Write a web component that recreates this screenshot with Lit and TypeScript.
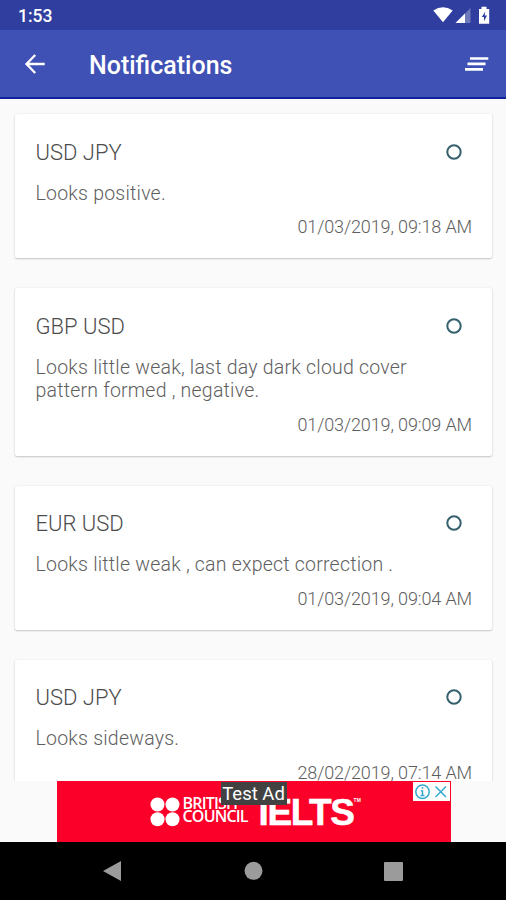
import { LitElement, html, css } from "lit";
import { customElement, property } from "lit/decorators.js";

interface Note {
  pair: string;
  text: string;
  date: string;
}

const NOTES: Note[] = [
  { pair: "USD JPY", text: "Looks positive.", date: "01/03/2019, 09:18 AM" },
  {
    pair: "GBP USD",
    text: "Looks little weak, last day dark cloud cover pattern formed , negative.",
    date: "01/03/2019, 09:09 AM",
  },
  { pair: "EUR USD", text: "Looks little weak , can expect correction .", date: "01/03/2019, 09:04 AM" },
  { pair: "USD JPY", text: "Looks sideways.", date: "28/02/2019, 07:14 AM" },
];

@customElement("note-card")
class NoteCard extends LitElement {
  @property({ attribute: false }) note!: Note;

  static styles = css`
    :host {
      display: block;
      box-sizing: border-box;
      background: #fff;
      border-radius: 2px;
      box-shadow: 0 1px 2px rgba(0, 0, 0, 0.2), 0 0 2px rgba(0, 0, 0, 0.08);
      padding: 24.5px 19.5px 20px 20.5px;
      color: #5e5e5e;
      font-weight: 300;
    }
    .head {
      display: flex;
      justify-content: space-between;
      align-items: center;
      height: 28px;
      padding-right: 10px;
    }
    .pair {
      font-size: 22px;
      line-height: 28px;
      color: #4c4c4c;
    }
    .ring {
      width: 16px;
      height: 16px;
      margin-top: -2px;
    }
    .text {
      margin: 15px 0 0;
      font-size: 19.5px;
      line-height: 23.4px;
      letter-spacing: 0.22px;
      padding-right: 40px;
    }
    .date {
      margin-top: 11.5px;
      font-size: 18px;
      line-height: 22px;
      letter-spacing: -0.12px;
      text-align: right;
    }
  `;

  render() {
    return html`
      <div class="head">
        <span class="pair">${this.note.pair}</span>
        <svg class="ring" viewBox="0 0 16 16">
          <circle cx="8" cy="8" r="6.7" fill="none" stroke="#35606d" stroke-width="2" />
        </svg>
      </div>
      <p class="text">${this.note.text}</p>
      <div class="date">${this.note.date}</div>
    `;
  }
}

@customElement("app-root")
class AppRoot extends LitElement {
  static styles = css`
    :host {
      display: flex;
      flex-direction: column;
      width: 506px;
      height: 900px;
      overflow: hidden;
      background: #fafafa;
      font-family: Roboto, "Liberation Sans", sans-serif;
    }
    .status {
      flex: none;
      box-sizing: border-box;
      display: flex;
      justify-content: space-between;
      height: 30px;
      padding: 0 15px 0 18px;
      background: #303f9f;
      color: #fff;
    }
    .time {
      font-size: 17.5px;
      font-weight: 500;
      line-height: 32px;
    }
    .signals {
      width: 60px;
      height: 30px;
    }
    .bar {
      flex: none;
      box-sizing: border-box;
      display: flex;
      align-items: center;
      height: 69px;
      padding: 0 17px 0 24px;
      background: #3f51b5;
      border-bottom: 2px solid #11219b;
      color: #fff;
    }
    .back {
      width: 22px;
      height: 22px;
      margin-top: 1px;
    }
    .title {
      flex: 1;
      margin: 4px 0 0 43px;
      font-size: 25px;
      font-weight: 500;
      line-height: 32px;
    }
    .clear {
      width: 25px;
      height: 18px;
      margin-top: 2px;
    }
    .list {
      flex: 1;
      min-height: 0;
      overflow: hidden;
      display: flex;
      flex-direction: column;
      gap: 29.7px;
      padding: 15px 14.5px 0 15px;
    }
    .list note-card {
      flex: none;
    }
    .ad-slot {
      flex: none;
      display: flex;
      justify-content: center;
      height: 61.5px;
      padding-left: 1px;
    }
    .ad {
      position: relative;
      box-sizing: border-box;
      display: flex;
      width: 394px;
      height: 61.5px;
      padding: 16px 0 0 93px;
      background: #fb0029;
      color: #fff;
    }
    .dots {
      flex: none;
      width: 30px;
      height: 30px;
    }
    .council {
      flex: none;
      width: 67px;
      margin-left: 3px;
      font-family: "Open Sans", "Noto Sans", sans-serif;
      font-size: 16px;
      font-weight: 600;
      line-height: 13.5px;
      letter-spacing: -0.8px;
    }
    .ielts {
      display: flex;
      margin-left: 9px;
      font-family: "Liberation Sans", Arial, sans-serif;
      font-size: 37px;
      font-weight: 700;
      line-height: 31px;
      letter-spacing: -1.4px;
      -webkit-text-stroke: 0.5px #fff;
    }
    .tm {
      font-size: 5px;
      line-height: 7px;
      letter-spacing: 0;
      -webkit-text-stroke: 0;
    }
    .test {
      position: absolute;
      top: 1px;
      left: 164px;
      width: 66px;
      height: 23px;
      background: #424242;
      font-size: 18.5px;
      line-height: 25px;
      text-align: center;
    }
    .choices {
      position: absolute;
      top: 1px;
      right: 1px;
      width: 37px;
      height: 19px;
      background: #fff;
    }
    .nav {
      flex: none;
      height: 58px;
      background: #000;
    }
    .keys {
      display: block;
      width: 506px;
      height: 58px;
    }
  `;

  render() {
    return html`
      <div class="status">
        <span class="time">1:53</span>
        <svg class="signals" viewBox="431 0 60 30">
          <path d="M433.300 10.500Q443 3.800 452.700 10.500L443 22.300Z" fill="#fff" />
          <path d="M470.500 8V23H455.500Z" fill="#fff" opacity=".3" />
          <path d="M465 13.500V23H455.500Z" fill="#fff" />
          <path d="M479 9h2.500V6.800h5V9H489.200V23.800H479Z" fill="#fff" />
          <path d="M485.300 11.500L481.800 17H484v4.200L487 15.500H484.700Z" fill="#303f9f" />
        </svg>
      </div>
      <div class="bar">
        <svg class="back" viewBox="0 0 22 22">
          <path d="M20.700 11H3M11.200 2L2.500 11L11.200 20" fill="none" stroke="#fff" stroke-width="2.300" />
        </svg>
        <span class="title">Notifications</span>
        <svg class="clear" viewBox="0 0 25 18">
          <path d="M6 2.500H24.300M3.500 7.900H21.500M1 13.300H19" stroke="#fff" stroke-width="2.700" />
        </svg>
      </div>
      <div class="list">${NOTES.map((n) => html`<note-card .note=${n}></note-card>`)}</div>
      <div class="ad-slot">
        <div class="ad">
          <svg class="dots" viewBox="0 0 30 30">
            <g fill="#fff">
              <circle cx="7.500" cy="7.500" r="7" />
              <circle cx="22.500" cy="7.500" r="7" />
              <circle cx="7.500" cy="22.300" r="7" />
              <circle cx="22.500" cy="22.300" r="7" />
            </g>
          </svg>
          <div class="council">BRITISH<br />COUNCIL</div>
          <div class="ielts">IELTS<span class="tm">TM</span></div>
          <div class="test">Test Ad</div>
          <svg class="choices" viewBox="0 0 37 19">
            <g fill="none" stroke="#35a9cf" stroke-width="1.500">
              <circle cx="9.500" cy="9.700" r="6.700" />
              <path d="M9.500 8.500V14M7.800 8.700H9.500M7.500 13.600H11.500M9.500 5V6.700M22.500 4.500L33 15M33 4.500L22.500 15" />
            </g>
          </svg>
        </div>
      </div>
      <div class="nav">
        <svg class="keys" viewBox="0 842 506 58">
          <g fill="#9b9b9b">
            <path d="M103 871L121 861V881Z" />
            <circle cx="253.500" cy="870.800" r="9" />
            <rect x="384" y="862" width="19" height="19" rx="1" />
          </g>
        </svg>
      </div>
    `;
  }
}
